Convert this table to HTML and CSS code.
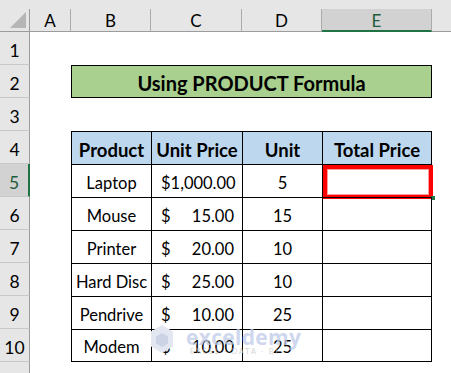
FILE: index.html
```html
<!DOCTYPE html>
<html>
<head>
<meta charset="utf-8">
<link rel="stylesheet" href="styles.css">
</head>
<body>
<div class="sheet">
  <div class="topbar"></div>

  <div class="corner"><span class="tri"></span></div>
  <div class="ch">A</div>
  <div class="ch">B</div>
  <div class="ch">C</div>
  <div class="ch">D</div>
  <div class="ch sel">E</div>
  <div class="ch last"></div>

  <div class="rh">1</div>
  <div class="c"></div><div class="c"></div><div class="c"></div><div class="c"></div><div class="c"></div><div class="c"></div>

  <div class="rh">2</div>
  <div class="c"></div>
  <div class="title">Using PRODUCT Formula</div>
  <div class="c"></div>

  <div class="rh">3</div>
  <div class="c"></div><div class="c"></div><div class="c"></div><div class="c"></div><div class="c"></div><div class="c"></div>

  <div class="rh">4</div>
  <div class="c"></div>
  <div class="t hd">Product</div>
  <div class="t hd">Unit Price</div>
  <div class="t hd">Unit</div>
  <div class="t hd re">Total Price</div>
  <div class="c"></div>

  <div class="rh rsel">5</div>
  <div class="c"></div>
  <div class="t">Laptop</div>
  <div class="t money"><span>$1,000.00</span></div>
  <div class="t">5</div>
  <div class="t re active"><span class="redbox"></span><span class="handle"></span></div>
  <div class="c"></div>

  <div class="rh">6</div>
  <div class="c"></div>
  <div class="t">Mouse</div>
  <div class="t money"><span>$</span><span>15.00</span></div>
  <div class="t">15</div>
  <div class="t re"></div>
  <div class="c"></div>

  <div class="rh">7</div>
  <div class="c"></div>
  <div class="t">Printer</div>
  <div class="t money"><span>$</span><span>20.00</span></div>
  <div class="t">10</div>
  <div class="t re"></div>
  <div class="c"></div>

  <div class="rh">8</div>
  <div class="c"></div>
  <div class="t">Hard Disc</div>
  <div class="t money"><span>$</span><span>25.00</span></div>
  <div class="t">10</div>
  <div class="t re"></div>
  <div class="c"></div>

  <div class="rh">9</div>
  <div class="c"></div>
  <div class="t">Pendrive</div>
  <div class="t money"><span>$</span><span>10.00</span></div>
  <div class="t">25</div>
  <div class="t re"></div>
  <div class="c"></div>

  <div class="rh">10</div>
  <div class="c"></div>
  <div class="t be">Modem</div>
  <div class="t be money"><span>$</span><span>10.00</span></div>
  <div class="t be">25</div>
  <div class="t be re"></div>
  <div class="c"></div>

  <div class="rh"></div>
  <div class="c"></div><div class="c"></div><div class="c"></div><div class="c"></div><div class="c"></div><div class="c"></div>

  <div class="watermark">
    <svg class="wm-logo" width="24" height="30" viewBox="0 0 24 30">
      <polygon points="12,1 23,7.5 23,22.5 12,29 1,22.5 1,7.5" fill="#e3e7f1"/>
      <polygon points="12,9 18,12.5 18,19.5 12,23 6,19.5 6,12.5" fill="#ccd3e5"/>
    </svg>
    <div class="wm-text">
      <span class="wm-name">exceldemy</span>
      <span class="wm-sub">EXCEL · DATA · BI</span>
    </div>
  </div>
</div>
</body>
</html>
```

FILE: styles.css
```css
html, body {
  margin: 0;
  padding: 0;
  background: #ffffff;
  overflow: hidden;
}

.sheet {
  position: relative;
  width: 451px;
  height: 373px;
  overflow: hidden;
  display: grid;
  grid-template-columns: 30px 41px 80px 91px 80px 110px 1fr;
  grid-template-rows: 9px 23px repeat(11, 33px);
  font-family: "Lato", "Liberation Sans", sans-serif;
  font-size: 16.5px;
  color: #000;
}

.sheet > div {
  box-sizing: border-box;
}

.topbar {
  grid-column: 1 / -1;
  background: #e6e6e6;
}

.corner {
  position: relative;
  background: #e6e6e6;
  border-right: 1px solid #9c9c9c;
  border-bottom: 1px solid #9c9c9c;
}

.tri {
  position: absolute;
  right: 3px;
  bottom: 3px;
  width: 16px;
  height: 16px;
  background: #b6b6b6;
  clip-path: polygon(100% 0, 100% 100%, 0 100%);
}

.ch {
  background: #e6e6e6;
  border-right: 1px solid #ababab;
  border-bottom: 1px solid #9c9c9c;
  display: flex;
  align-items: center;
  justify-content: center;
  font-size: 17px;
  padding-top: 1px;
}

.ch.sel {
  background: #d2d2d2;
  color: #1e5c3a;
  border-bottom: 2px solid #217346;
}

.ch.last {
  border-right: none;
}

.rh {
  background: #e6e6e6;
  border-right: 1px solid #9c9c9c;
  border-bottom: 1px solid #c9c9c9;
  display: flex;
  align-items: center;
  justify-content: center;
  font-size: 17.5px;
  padding-top: 4px;
}

.rh.rsel {
  background: #d2d2d2;
  color: #1e5c3a;
  border-right: 2px solid #217346;
}

.c {
  background: #fff;
}

.title {
  grid-column: 3 / 7;
  background: #a9d08e;
  border: 1px solid #000;
  display: flex;
  align-items: center;
  justify-content: center;
  font-weight: bold;
  font-size: 20px;
  padding-top: 2px;
}

.t {
  position: relative;
  border-left: 1px solid #000;
  border-top: 1px solid #000;
  display: flex;
  align-items: center;
  justify-content: center;
  padding-top: 3px;
}

.t.re {
  border-right: 1px solid #000;
}

.t.be {
  border-bottom: 1px solid #000;
}

.t.hd {
  background: #bdd7ee;
  font-weight: bold;
  font-size: 18.5px;
}

.t.money {
  justify-content: space-between;
  padding-left: 9px;
  padding-right: 8px;
}

.redbox {
  position: absolute;
  left: 0px;
  top: 0px;
  right: -2px;
  bottom: -2px;
  border: 4px solid #ff0000;
  box-shadow: inset 0 0 0 1px #ff9a9a;
}

.handle {
  position: absolute;
  right: -4px;
  bottom: -3px;
  width: 4px;
  height: 4px;
  background: #217346;
}

.watermark {
  position: absolute;
  left: 150px;
  top: 324px;
  display: flex;
  align-items: flex-start;
  gap: 12px;
  pointer-events: none;
}

.wm-text {
  display: flex;
  flex-direction: column;
  line-height: 1;
  padding-top: 3px;
}

.wm-name {
  font-family: "Open Sans", "Liberation Sans", sans-serif;
  font-size: 21px;
  font-weight: bold;
  color: rgba(190, 202, 232, 0.75);
  letter-spacing: 0.3px;
}

.wm-sub {
  font-size: 7px;
  color: rgba(200, 200, 200, 0.8);
  letter-spacing: 2px;
  margin-left: 4px;
}
```
